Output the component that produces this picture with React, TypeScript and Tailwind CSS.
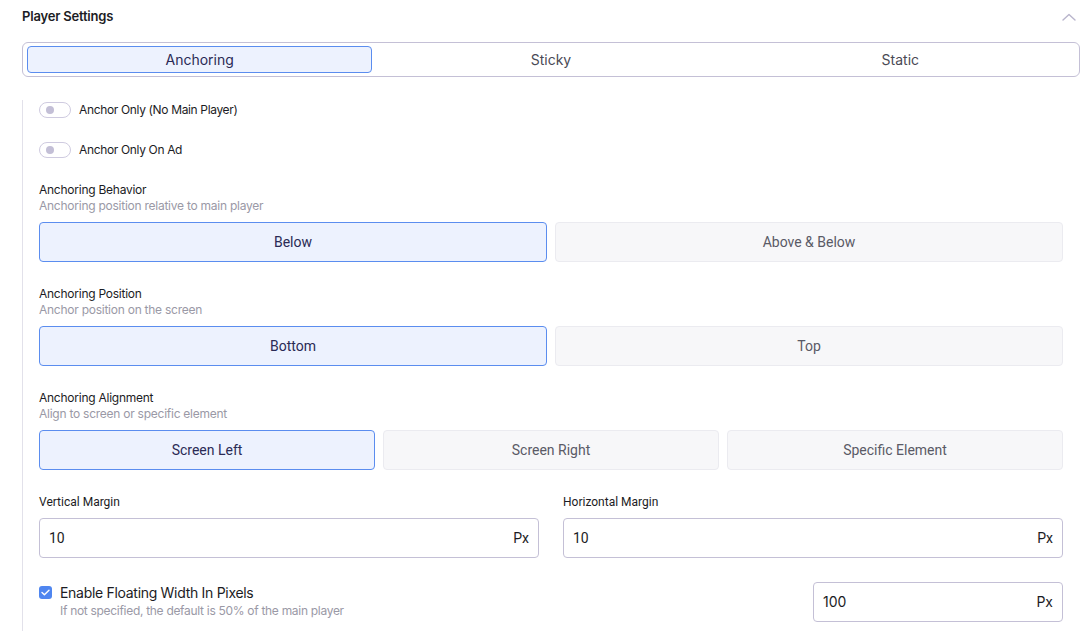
import { useState } from "react";

const inter = "font-['Inter','Noto_Sans',sans-serif]";
const roboto = "font-['Roboto','Liberation_Sans',sans-serif]";

function Toggle({ label }: { label: string }) {
  return (
    <div className="flex h-4 items-center gap-2">
      <span className="relative flex h-4 w-8 items-center rounded-full border border-[#cfcbe0] bg-white">
        <span className="ml-[6px] h-2 w-2 rounded-full bg-[#c3bfd6]" />
      </span>
      <span className="text-xs tracking-[-0.35px] text-[#1c1c24]">{label}</span>
    </div>
  );
}

function SectionHead({ title, sub }: { title: string; sub: string }) {
  return (
    <div className="flex flex-col tracking-[-0.25px]">
      <span className="text-xs leading-4 text-[#1c1c24]">{title}</span>
      <span className="text-xs leading-4 text-[#9a99a6]">{sub}</span>
    </div>
  );
}

function Options({
  items,
  active,
  cols,
}: {
  items: string[];
  active: number;
  cols: "grid-cols-2" | "grid-cols-3";
}) {
  return (
    <div className={`grid ${cols} gap-2`}>
      {items.map((it, i) => (
        <button
          key={it}
          className={
            i === active
              ? `flex h-10 items-center justify-center rounded border border-[#5b8def] bg-[#edf2fe] text-sm text-[#2a2a55] ${roboto}`
              : `flex h-10 items-center justify-center rounded border border-[#ebebf0] bg-[#f7f7f9] text-sm text-[#5a5a66] ${roboto}`
          }
        >
          {it}
        </button>
      ))}
    </div>
  );
}

function PxInput({ value, className = "" }: { value: string; className?: string }) {
  return (
    <div
      className={`flex h-10 items-center justify-between rounded border border-[#c4c0d6] bg-white px-[9px] text-sm text-[#1c1c24] ${className}`}
    >
      <span>{value}</span>
      <span>Px</span>
    </div>
  );
}

export default function App() {
  const [tab, setTab] = useState(0);
  const tabs = ["Anchoring", "Sticky", "Static"];
  return (
    <div className={`h-[631px] w-[1092px] overflow-hidden bg-white ${inter}`}>
      <div className="flex items-center justify-between pl-[22px] pr-[16px] pt-[7px]">
        <span className="text-[13px] font-semibold leading-[18px] tracking-[-0.2px] text-[#1c1c24]">Player Settings</span>
        <svg width="14" height="8" viewBox="0 0 14 8" fill="none" className="mt-[2px]">
          <path d="M1 7L7 1.5L13 7" stroke="#b9b5cc" strokeWidth="1.4" strokeLinecap="round" strokeLinejoin="round" />
        </svg>
      </div>

      <div className="mx-[22px] mr-[12px] mt-[17px] grid h-[35px] grid-cols-3 gap-0 rounded-md border border-[#c4c0d6] p-[3px] px-[4px]">
        {tabs.map((t, i) => (
          <button
            key={t}
            onClick={() => setTab(i)}
            className={
              i === tab
                ? "mr-[4px] flex items-center justify-center rounded border border-[#5b8def] bg-[#edf2fe] text-sm text-[#2a2a55]"
                : "flex items-center justify-center text-sm text-[#4a4a55]"
            }
          >
            {t}
          </button>
        ))}
      </div>

      <div className="ml-[22px] mr-[29px] mt-[23px] flex flex-col border-l border-[#e2e1ea] pb-8 pl-4 pt-[2px]">
        <Toggle label="Anchor Only (No Main Player)" />
        <div className="mt-6">
          <Toggle label="Anchor Only On Ad" />
        </div>

        <div className="mt-6 flex flex-col gap-2">
          <SectionHead title="Anchoring Behavior" sub="Anchoring position relative to main player" />
          <Options items={["Below", "Above & Below"]} active={0} cols="grid-cols-2" />
        </div>

        <div className="mt-6 flex flex-col gap-2">
          <SectionHead title="Anchoring Position" sub="Anchor position on the screen" />
          <Options items={["Bottom", "Top"]} active={0} cols="grid-cols-2" />
        </div>

        <div className="mt-6 flex flex-col gap-2">
          <SectionHead title="Anchoring Alignment" sub="Align to screen or specific element" />
          <Options items={["Screen Left", "Screen Right", "Specific Element"]} active={0} cols="grid-cols-3" />
        </div>

        <div className={`mt-6 grid grid-cols-2 gap-6 ${roboto}`}>
          <div className="flex flex-col gap-2">
            <span className="text-xs leading-4 text-[#1c1c24]">Vertical Margin</span>
            <PxInput value="10" />
          </div>
          <div className="flex flex-col gap-2">
            <span className="text-xs leading-4 text-[#1c1c24]">Horizontal Margin</span>
            <PxInput value="10" />
          </div>
        </div>

        <div className="mt-6 flex items-start justify-between">
          <div className="flex items-start gap-2 pt-[2px] tracking-[-0.3px]">
            <span className="mt-[2px] flex h-[13px] w-[13px] items-center justify-center rounded-[3px] bg-[#4f86f0]">
              <svg width="9" height="7" viewBox="0 0 9 7" fill="none">
                <path d="M1 3.5L3.4 5.8L8 1.2" stroke="white" strokeWidth="1.4" strokeLinecap="round" strokeLinejoin="round" />
              </svg>
            </span>
            <div className="flex flex-col">
              <span className="text-sm leading-[18px] text-[#1c1c24]">Enable Floating Width In Pixels</span>
              <span className="mt-[1px] text-xs leading-4 text-[#9a99a6]">If not specified, the default is 50% of the main player</span>
            </div>
          </div>
          <PxInput value="100" className="w-[250px]" />
        </div>
      </div>
    </div>
  );
}
